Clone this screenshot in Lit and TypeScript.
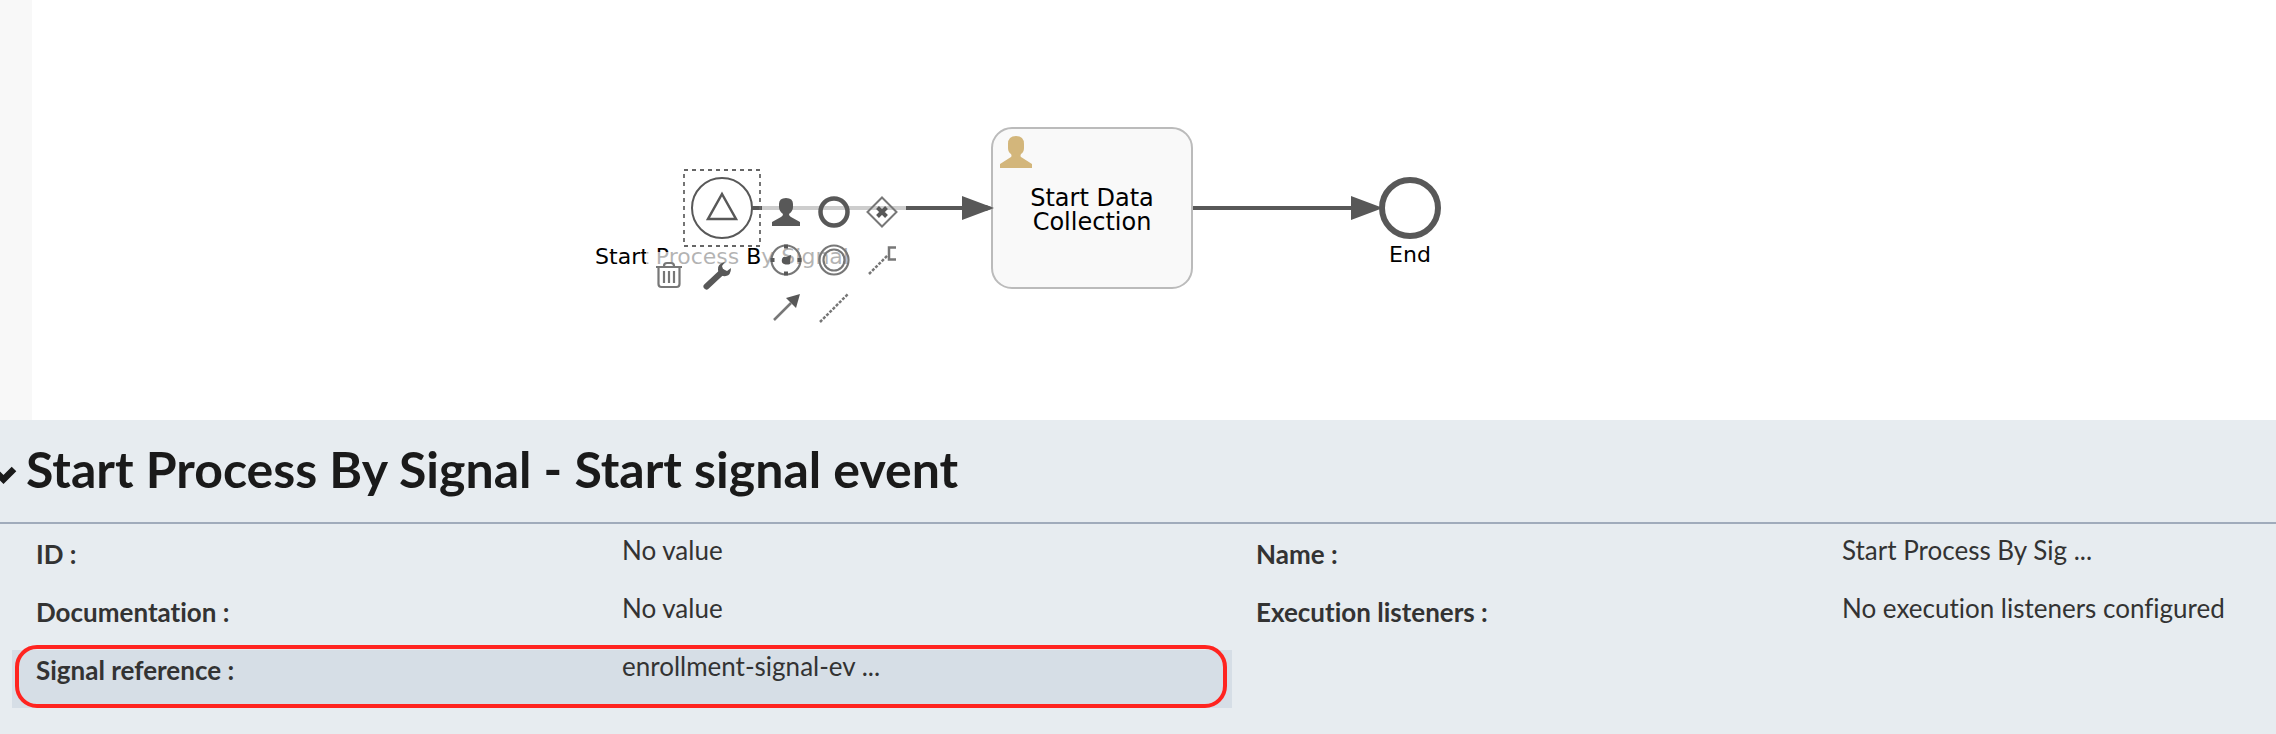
import { LitElement, html, css, svg } from "lit";
import { customElement } from "lit/decorators.js";

interface Field {
  label: string;
  value: string;
  active?: boolean;
}

const FIELDS: Field[][] = [
  [
    { label: "ID", value: "No value" },
    { label: "Documentation", value: "No value" },
    { label: "Signal reference", value: "enrollment-signal-ev ...", active: true },
  ],
  [
    { label: "Name", value: "Start Process By Sig ..." },
    { label: "Execution listeners", value: "No execution listeners configured" },
  ],
];

const icon = (body: unknown) =>
  html`<svg class="glyph" viewBox="-2 0 48 48" aria-hidden="true">${body}</svg>`;

const PAD_CREATE = [
  {
    title: "Append user task",
    body: svg`<path d="M8 38v-4l9-5q2-1 2-3q-4-3-4-7v-3q0-6 7-6t7 6v3q0 4-4 7q0 2 2 3l9 5v4z" fill="#585858"/>`,
  },
  {
    title: "Append end event",
    body: svg`<circle cx="22" cy="24" r="13.5" fill="none" stroke="#585858" stroke-width="4.5"/>`,
  },
  {
    title: "Append gateway",
    body: svg`<path d="M22 9.500L36.500 24L22 38.500L7.500 24z" fill="none" stroke="#777" stroke-width="2"/><path d="M17.500 19.500l9 9M26.500 19.500l-9 9" stroke="#585858" stroke-width="4"/>`,
  },
  {
    title: "Append timer catch event",
    body: svg`<circle cx="22" cy="24" r="14.500" fill="none" stroke="#777" stroke-width="2.200"/><path d="M22 8.500v4M22 35.500v4M6.500 24h4M33.500 24h4" stroke="#585858" stroke-width="4"/><path d="M27 19l-1 9q-3 1-6 0q-3-1-2-5q1-3 4-2z" fill="#585858"/>`,
  },
  {
    title: "Append throw event",
    body: svg`<circle cx="22" cy="24" r="14.500" fill="none" stroke="#777" stroke-width="2.200"/><circle cx="22" cy="24" r="10.500" fill="none" stroke="#777" stroke-width="2.200"/>`,
  },
  {
    title: "Append text annotation",
    body: svg`<path d="M9 38L28 19" fill="none" stroke="#777" stroke-width="2.500" stroke-dasharray="3 1.500"/><path d="M36 11.500h-7v12h7" fill="none" stroke="#777" stroke-width="2.500"/>`,
  },
  {
    title: "Connect using sequence flow",
    body: svg`<path d="M10 36L27 19" stroke="#777" stroke-width="2.500"/><path d="M36 10l-14 4l10 10z" fill="#585858"/>`,
  },
  {
    title: "Connect using association",
    body: svg`<path d="M8 38L36 10" stroke="#777" stroke-width="2.500" stroke-dasharray="3 1.500"/>`,
  },
];

const PAD_EDIT = [
  {
    title: "Remove",
    body: svg`<path d="M8 15h26M16 14q0-3 3-3h4q3 0 3 3M10.500 16v16q0 3 3 3h15q3 0 3-3v-16M16 19v12M21 19v12M26 19v12" fill="none" stroke="#777" stroke-width="2.200"/>`,
  },
  {
    title: "Change type",
    body: svg`<path d="M10.500 34.500L26 20" stroke="#585858" stroke-width="6" stroke-linecap="round"/><path d="M29 10q-8 2-7 8q1 7 8 6q5-1 5-8l-4 3l-4-2l-1-3z" fill="#585858"/>`,
  },
];

@customElement("app-root")
export class AppRoot extends LitElement {
  static styles = css`
    :host {
      display: flex;
      flex-direction: column;
      min-height: 100vh;
      background: #e7ecf0;
      color: #333;
      font-family: Lato, sans-serif;
      overflow: hidden;
    }
    * {
      box-sizing: border-box;
    }
    .editor {
      display: flex;
      height: 420px;
      background: #fff;
    }
    .rail {
      width: 32px;
      background: #f8f8f8;
    }
    .canvas {
      position: relative;
      flex: 1;
      overflow: hidden;
    }
    .diagram {
      display: block;
      width: 1500px;
      height: 420px;
      font-family: Verdana, "DejaVu Sans", sans-serif;
    }
    .event-name {
      font-size: 22px;
    }
    .task-name {
      font-size: 24px;
    }
    .pad {
      position: absolute;
      display: flex;
      flex-wrap: wrap;
    }
    .pad-create {
      left: 730px;
      top: 188px;
      width: 144px;
    }
    .pad-edit {
      left: 614px;
      top: 252px;
      width: 96px;
    }
    .tool {
      width: 48px;
      height: 48px;
      padding: 0;
      border: 0;
      background: rgba(255, 255, 255, 0.7);
    }
    .glyph {
      display: block;
      width: 48px;
      height: 48px;
    }
    .heading {
      display: flex;
      align-items: center;
      height: 104px;
      border-bottom: 2px solid #a0abbb;
    }
    .title {
      margin: 0;
      padding-bottom: 4px;
      font-size: 50px;
      line-height: 64px;
      font-weight: 700;
      color: #1a1a1a;
      white-space: nowrap;
    }
    .toggle {
      flex: none;
      width: 26px;
      height: 32px;
      padding: 0;
      border: 0;
      background: none;
    }
    .chevron {
      display: block;
      width: 26px;
      height: 32px;
    }
    .fields {
      display: grid;
      grid-template-columns: repeat(2, minmax(0, 1fr));
      width: calc(100% + 176px);
      padding: 10px 0 0 12px;
      font-variant-ligatures: none;
    }
    .column {
      margin: 0;
    }
    .field {
      position: relative;
      display: grid;
      grid-template-columns: 586px 1fr;
      height: 58px;
      padding-left: 24px;
      font-size: 26px;
      line-height: 32px;
      white-space: nowrap;
    }
    .name {
      padding-top: 4px;
      font-weight: 700;
    }
    .value {
      margin: 0;
    }
    .active {
      background: #d6dee6;
    }
    .active::after {
      content: "";
      position: absolute;
      inset: -5px 5px 0 3px;
      border: 4px solid #ff2420;
      border-radius: 22px;
    }
  `;

  private renderTool = (tool: { title: string; body: unknown }) => html`
    <button class="tool" type="button" aria-label=${tool.title}>${icon(tool.body)}</button>
  `;

  private renderDiagram() {
    return html`
      <svg class="diagram" viewBox="32 0 1500 420" role="img" aria-label="Process diagram">
        <g stroke="#585858" stroke-width="4" stroke-linecap="round">
          <path d="M753 208H970M1193 208H1358" />
        </g>
        <path d="M962 196L994 208L962 220zM1351 196L1383 208L1351 220z" fill="#585858" />
        <rect x="684" y="170" width="76" height="76" fill="none" stroke="#666" stroke-width="1.800" stroke-dasharray="4 4" />
        <circle cx="722" cy="208" r="30" fill="#fff" stroke="#585858" stroke-width="2" />
        <path d="M722 194L736 219H708z" fill="#fff" stroke="#585858" stroke-width="2.500" />
        <rect x="992" y="128" width="200" height="160" rx="20" fill="#f9f9f9" stroke="#bbb" stroke-width="2" />
        <path d="M986 205L994 208L986 211z" fill="#585858" />
        <path d="M1000 168v-4l11-7q1-1 0-3q-3-2-3-6v-4q0-8 8-8t8 8v4q0 4-3 6q-1 2 0 3l11 7v4z" fill="#d3b67b" />
        <circle cx="1410" cy="208" r="28" fill="#fff" stroke="#585858" stroke-width="6" />
        <text class="event-name" x="722" y="264" text-anchor="middle">Start Process By Signal</text>
        <text class="task-name" x="1092" y="206" text-anchor="middle">Start Data</text>
        <text class="task-name" x="1092" y="230" text-anchor="middle">Collection</text>
        <text class="event-name" x="1410" y="262" text-anchor="middle">End</text>
      </svg>
    `;
  }

  private renderField = (field: Field) => html`
    <div class="field ${field.active ? "active" : ""}">
      <dt class="name">${field.label} :</dt>
      <dd class="value">${field.value}</dd>
    </div>
  `;

  render() {
    return html`
      <section class="editor">
        <div class="rail"></div>
        <div class="canvas">
          ${this.renderDiagram()}
          <div class="pad pad-create">${PAD_CREATE.map(this.renderTool)}</div>
          <div class="pad pad-edit">${PAD_EDIT.map(this.renderTool)}</div>
        </div>
      </section>
      <section>
        <header class="heading">
          <button class="toggle" type="button" aria-label="Collapse properties">
            <svg class="chevron" viewBox="0 0 26 32" aria-hidden="true">
              <path d="M-7 14L3.500 24.500L14 14" fill="none" stroke="#1a1a1a" stroke-width="6.500" />
            </svg>
          </button>
          <h1 class="title">Start Process By Signal - Start signal event</h1>
        </header>
        <div class="fields">
          ${FIELDS.map((column) => html`<dl class="column">${column.map(this.renderField)}</dl>`)}
        </div>
      </section>
    `;
  }
}
